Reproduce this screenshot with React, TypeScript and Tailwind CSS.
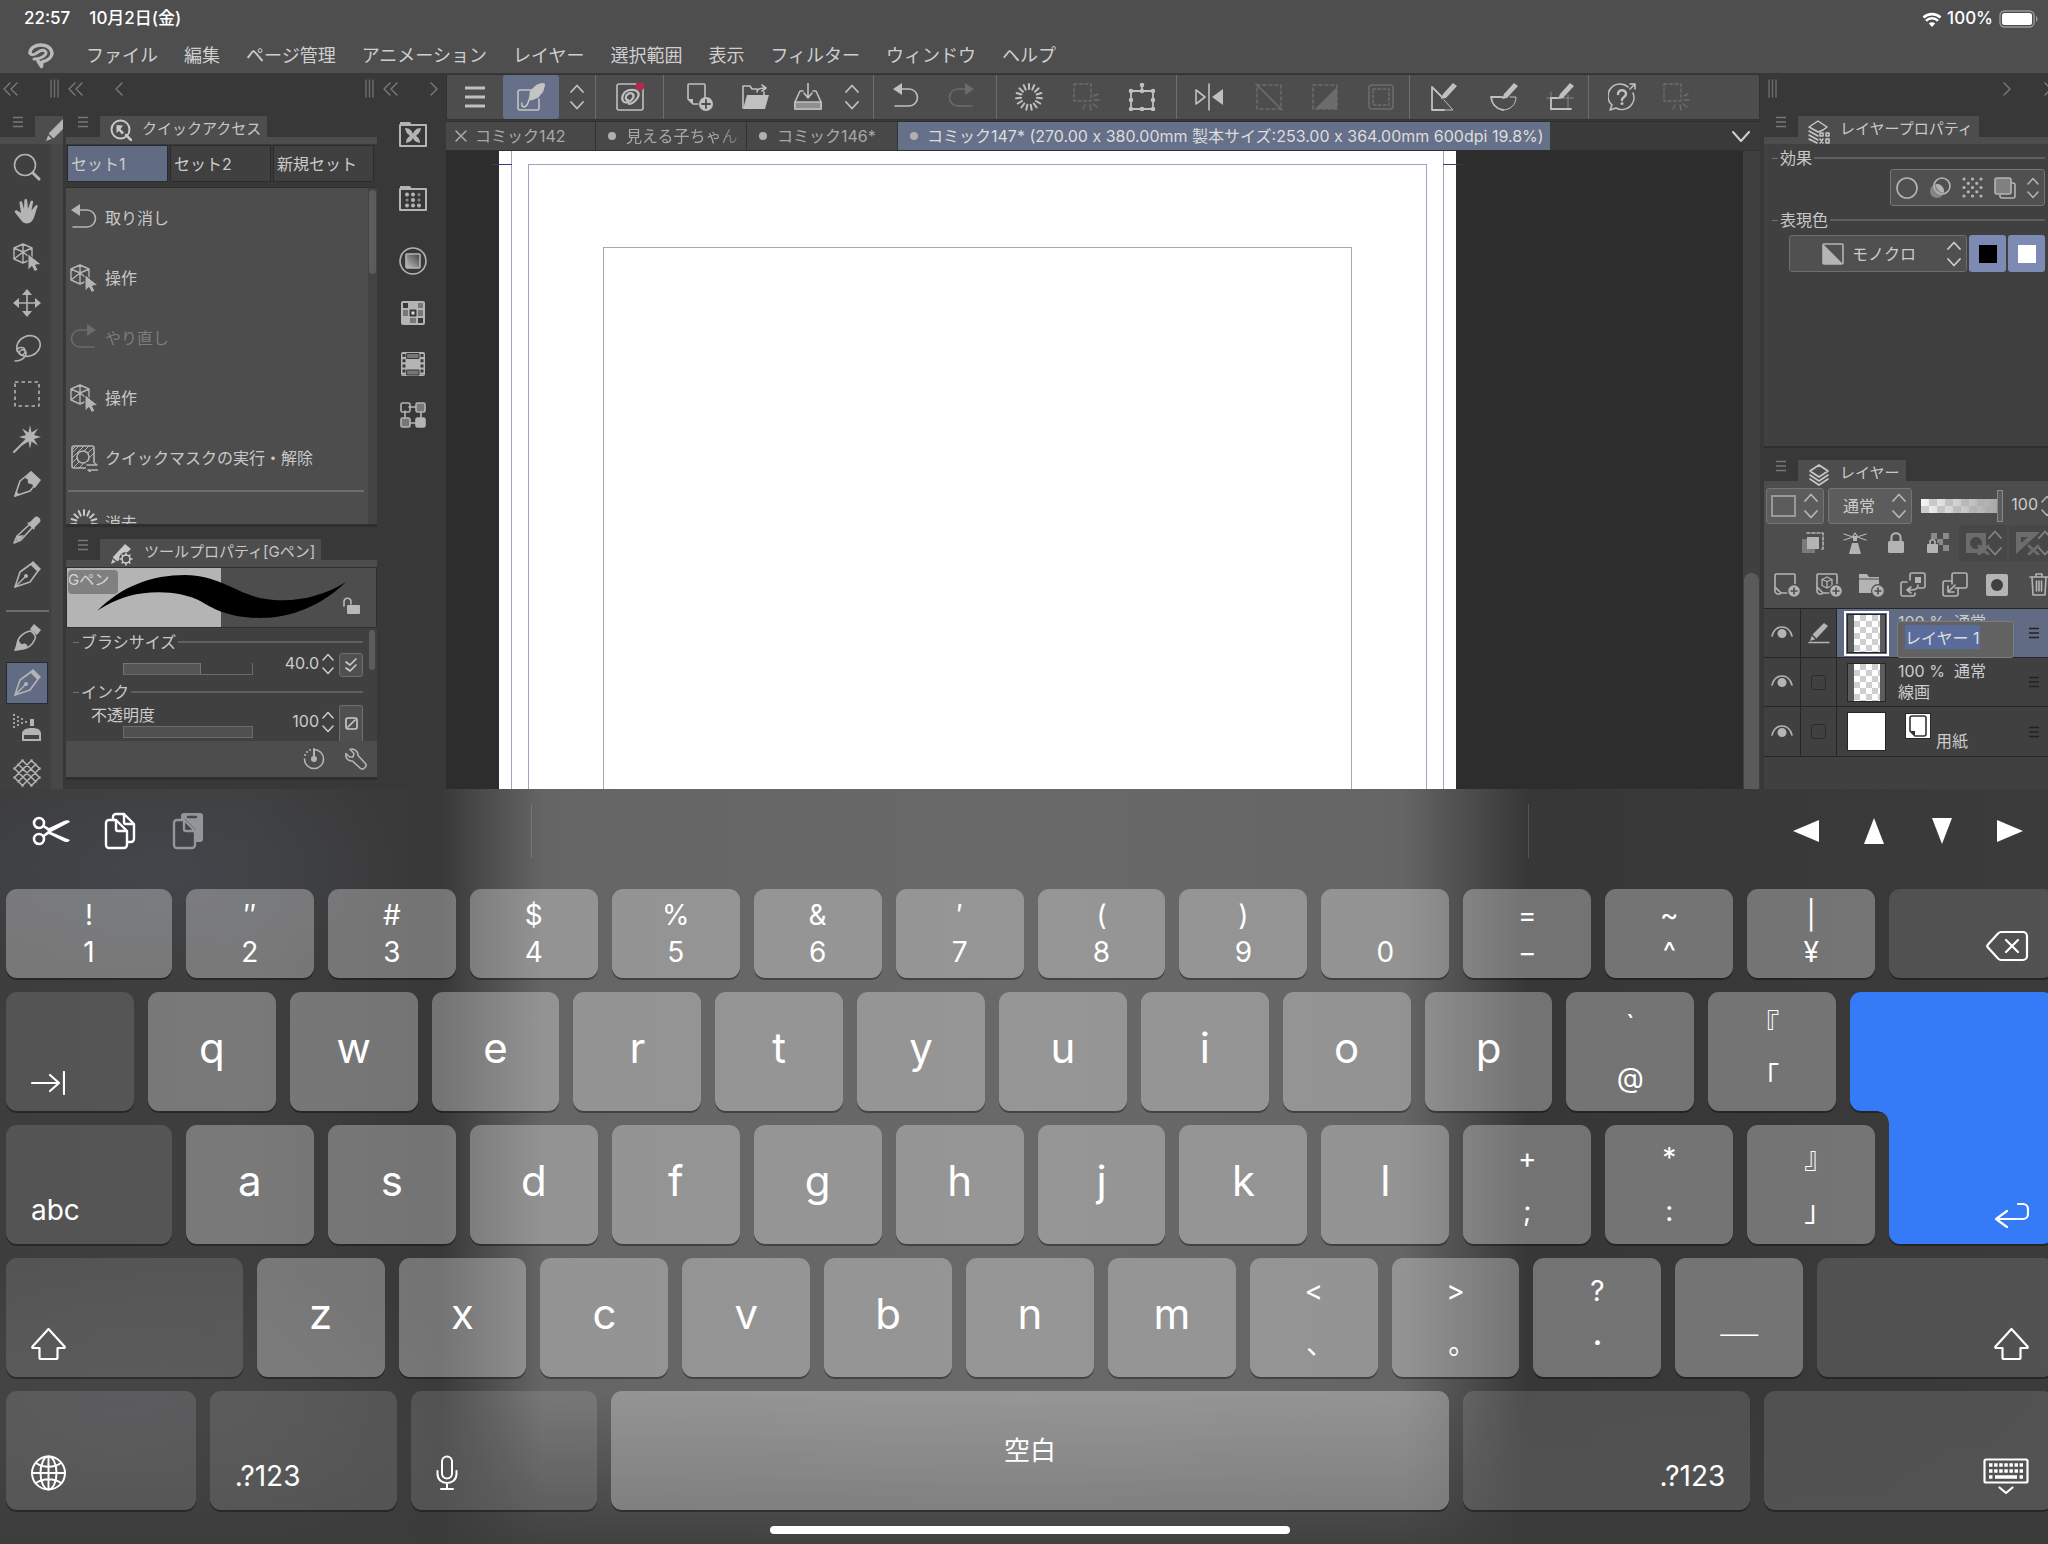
import React, { useEffect, useRef } from 'react';

interface IconProps {
	w?: number;
	h?: number;
	sw?: number;
	className?: string;
	children: React.ReactNode;
}

function Icon({ w = 28, h = 28, sw = 1.6, className = '', children }: IconProps) {
	return (
		<svg
			width={w}
			height={h}
			viewBox={`0 0 ${w} ${h}`}
			fill="none"
			stroke="currentColor"
			strokeWidth={sw}
			strokeLinecap="round"
			strokeLinejoin="round"
			className={`shrink-0 ${className}`}
			aria-hidden="true"
		>
			{children}
		</svg>
	);
}

const fill = { fill: 'currentColor', stroke: 'none' };

/* small shared glyphs */

function UpDown({ className = '' }: { className?: string }) {
	return (
		<Icon w={14} h={26} sw={1.8} className={className}>
			<path d="M1 8 7 1.5 13 8M1 18l6 6.5 6-6.5" />
		</Icon>
	);
}

function SmallUpDown({ className = '' }: { className?: string }) {
	return (
		<Icon w={12} h={22} sw={1.5} className={className}>
			<path d="M1 7 6 1.5 11 7M1 15l5 5.5 5-5.5" />
		</Icon>
	);
}

function Burger({ className = '' }: { className?: string }) {
	return (
		<Icon w={12} h={12} sw={1.4} className={className}>
			<path d="M1 1.5h10M1 6h10M1 10.5h10" strokeLinecap="butt" />
		</Icon>
	);
}

function Grip() {
	return (
		<Icon w={9} h={19} sw={1.4} className="text-[#6e6e6e]">
			<path d="M1 .5v18M4.500 .5v18M8 .5v18" strokeLinecap="butt" />
		</Icon>
	);
}

function DoubleLeft() {
	return (
		<Icon w={15} h={14} sw={1.4} className="text-[#7a7a7a]">
			<path d="M7 1 1 7l6 6M14 1 8 7l6 6" />
		</Icon>
	);
}

function Left() {
	return (
		<Icon w={8} h={14} sw={1.4} className="text-[#7a7a7a]">
			<path d="M7 1 1 7l6 6" />
		</Icon>
	);
}

function Right() {
	return (
		<Icon w={8} h={14} sw={1.4} className="text-[#7a7a7a]">
			<path d="m1 1 6 6-6 6" />
		</Icon>
	);
}

/* tool icons */

const Cube = (
	<>
		<path d="M10 1 19 5v11L10 20 1 16V5ZM1 5l9 4 9-4M10 9v11M10 1v8M1 16l9-7 9 7" strokeWidth={1.4} />
		<path d="M15 11v16l4-3.500 2.500 5 3.500-1.500-2.500-5 5.500-.5Z" fill="currentColor" stroke="#484848" strokeWidth={1} />
	</>
);

const Nib = (
	<>
		<path d="M2 26 7 11l11-8 7 7-8 11Z" />
		<path d="m2 26 10-10" strokeWidth={1.4} />
		<circle cx="13" cy="15" r="2" {...fill} />
		<path d="m17 3 3-3 8 8-3 3Z" {...fill} />
	</>
);

const UndoShape = (
	<>
		<path d="M9 6h8a8.500 8.500 0 0 1 0 17H3" />
		<path d="M10 0v12L1 6Z" {...fill} />
	</>
);

const RedoShape = (
	<>
		<path d="M18 6h-8a8.500 8.500 0 0 0 0 17h14" />
		<path d="M17 0v12l9-6Z" {...fill} />
	</>
);

const burstAngles = [0, 24, 48, 72, 96, 120, 144, 168, 192, 216, 240, 264, 288, 312, 336];

const Burst = (
	<>
		{burstAngles.map((a) => (
			<path key={a} d="M14 1v5" strokeWidth={2} transform={`rotate(${a} 14 14)`} />
		))}
	</>
);

const DashBurst = (
	<>
		<path d="M1 1h17v17H1Z" strokeDasharray="3 2.500" strokeWidth={1.4} />
		<path d="M21 17h5M20 21l4 3M17 22l1 5M12 22l-2 4M21 13l4-2" strokeWidth={1.4} />
	</>
);

const Search = (
	<>
		<circle cx="12" cy="12" r="10.500" />
		<path d="m20 20 6 6" strokeWidth={3} />
	</>
);

const Hand = (
	<path
		d="M8 22 2 14.500c-1-1.500 1-3 2.500-1.700L8 15 6.500 5c-.3-2 2.300-2.500 2.800-.5L11 11l.4-8.500c0-2 2.800-2 2.800 0L15 11l2.500-7.500c.6-1.900 3-1.200 2.600.7L18.500 12.500l3.800-4.800c1.200-1.500 3-.3 2.200 1.300C22 14 21.500 25 14.500 25.500 11 25.500 9.500 24 8 22Z"
		{...fill}
	/>
);

const Move = (
	<>
		<path d="M14 4v20M4 14h20" />
		<path d="m14 0 5 6H9ZM14 28l5-6H9ZM0 14l6-5v10ZM28 14l-6-5v10Z" {...fill} />
	</>
);

const Lasso = (
	<>
		<ellipse cx="15.500" cy="12" rx="12" ry="10" transform="rotate(-25 15.500 12)" />
		<path d="M4 17c0-4 7-5 8-1s-3 6-5 4 1-5 4-4c5 2 1 11-9 11" strokeWidth={1.4} />
	</>
);

const Wand = (
	<>
		<path d="m1 27 13-13" strokeWidth={2} />
		<path d="m17 0 1.500 7.500L25 3.500 21 10l7 2-7 2 4 6.500-6.500-4L17 24l-1.500-7.500-6.500 4 4-6.500-7-2 7-2-4-6.500 6.500 4Z" {...fill} />
	</>
);

const Pencil = (
	<>
		<path d="M2 26 7 11 18 2l8 8-9 11Z" />
		<path d="m12 8 6-7 10 9-6 8c-2-1-2-4-4-4s-4-1-3-4c0-1-2-1-3-2Z" {...fill} />
		<path d="m1 27 2-6 4 4Z" {...fill} />
	</>
);

const Dropper = (
	<>
		<path d="m19 12-11 12-7 3 3-7L16 9" />
		<path d="m4 20 7-1-4 5-4 1Z" {...fill} />
		<path d="m14 7 3-1 5-5c2-2 7 2 5 5l-5 5-1 3Z" {...fill} />
	</>
);

const Brush = (
	<>
		<path d="M4 22c0-8 6-14 14-15 4 3 5 6 4 8-3 7-8 10-14 10" />
		<path d="m1 27 4-11c2 1 2 4 4 4s2-1 4 0 1 4 3 3c-4 3-9 3-15 4ZM17 5l4-5 7 6-4 5Z" {...fill} />
	</>
);

const Spray = (
	<>
		<path d="M9 27V20c0-4 4-6 10-6s9 2 9 6v7ZM17 5h4v7h-4Z" {...fill} />
		<path d="M11 21h15v4H11Z" fill="#444" stroke="none" />
		<path d="M1 1h.01M1 5h.01M1 9h.01M1 13h.01M5 3h.01M5 7h.01M5 11h.01M9 5h.01M9 9h.01M13 8h.01" strokeWidth={2.2} />
	</>
);

const Mesh = (
	<path
		d="M9 1l18 18M18 1l9 9M1 9l18 18M1 18l9 9M5 5l18 18M19 1 1 19M10 1 1 10M27 9 9 27M27 18l-9 9M23 5 5 23"
		strokeWidth={1.5}
	/>
);

const Marquee = <path d="M2 2h24v24H2Z" strokeDasharray="3.500 3" strokeLinecap="butt" />;

const tools = [
	{ name: '虫めがね', icon: Search },
	{ name: '移動', icon: Hand },
	{ name: '操作', icon: Cube },
	{ name: 'レイヤー移動', icon: Move },
	{ name: '選択範囲', icon: Lasso },
	{ name: '長方形選択', icon: Marquee },
	{ name: '自動選択', icon: Wand },
	{ name: '鉛筆', icon: Pencil },
	{ name: 'スポイト', icon: Dropper },
	{ name: 'ペン', icon: Nib },
];

const drawTools = [
	{ name: '筆', icon: Brush },
	{ name: 'Gペン', icon: Nib, active: true },
	{ name: 'エアブラシ', icon: Spray },
	{ name: 'デコレーション', icon: Mesh },
];

const menus = [
	'ファイル',
	'編集',
	'ページ管理',
	'アニメーション',
	'レイヤー',
	'選択範囲',
	'表示',
	'フィルター',
	'ウィンドウ',
	'ヘルプ',
];

function StatusBar() {
	return (
		<div className="flex h-9 items-center justify-between pt-[2px] pr-[10px] pl-6 text-[17px] font-medium text-white">
			<div className="flex gap-[19px]">
				<span>22:57</span>
				<span>10月2日(金)</span>
			</div>
			<div className="flex items-center gap-1">
				<Icon w={20} h={15}>
					<path d="M10 15 6.800 11.500a4.500 4.500 0 0 1 6.400 0Z" {...fill} />
					<path d="M4 8.800a8.500 8.500 0 0 1 12 0M1.500 5.500a12.500 12.500 0 0 1 17 0" strokeWidth={2.6} strokeLinecap="butt" />
				</Icon>
				<span className="pr-[2px] pl-px">100%</span>
				<Icon w={39} h={18} sw={1.4}>
					<rect x="1" y="1" width="34" height="16" rx="4.500" stroke="#9a9a9a" />
					<rect x="3" y="3" width="30" height="12" rx="2.500" {...fill} />
					<path d="M37 6c2 1 2 5 0 6Z" fill="#9a9a9a" stroke="none" />
				</Icon>
			</div>
		</div>
	);
}

function MenuBar() {
	return (
		<nav className="flex h-[37px] items-center pt-[2px] pl-[27px] text-[18px] text-[#cfcfcf]">
			<Icon w={27} h={26} sw={3.4} className="text-[#b9b9b9]">
				<path d="M3 10C3 5 8 2 14 2c7 0 11 4 11 9-1 5-6 7-10 8l-.5 4.500L11 18" />
				<path d="M3 10c1 2 3 2 5 1l5-3c4-2 8 1 5 4-3 3-7 4-11 4" strokeWidth={3} />
			</Icon>
			<div className="flex gap-[26px] pl-8">
				{menus.map((m) => (
					<button key={m} type="button">
						{m}
					</button>
				))}
			</div>
		</nav>
	);
}

interface PanelTabProps {
	title: string;
	icon: React.ReactNode;
}

function PanelTab({ title, icon }: PanelTabProps) {
	return (
		<div className="flex h-10 shrink-0 items-end border-b-[7px] border-[#4d4d4d] bg-[#383838] pl-[11px]">
			<Burger className="mb-[9px] text-[#777777]" />
			<h2 className="relative z-10 ml-[11px] flex h-[21px] items-center gap-[10px] bg-[#4d4d4d] pt-[6px] pr-[6px] pl-[10px] text-[15px] text-[#c8c8c8]">
				{icon}
				<span>{title}</span>
			</h2>
		</div>
	);
}

function ToolButton({ name, icon, active }: { name: string; icon: React.ReactNode; active?: boolean }) {
	return (
		<button
			type="button"
			aria-label={name}
			className={
				active
					? 'flex h-[42px] w-[42px] items-center justify-center self-center border border-[#252a35] bg-[#626b84]'
					: 'flex w-[42px] items-center justify-center'
			}
		>
			<Icon>{icon}</Icon>
		</button>
	);
}

function ToolColumn() {
	return (
		<aside className="flex w-[63px] shrink-0 flex-col overflow-hidden">
			<div className="flex h-[31px] shrink-0 items-center justify-between bg-[#383838] pr-1 pl-[3px]">
				<DoubleLeft />
				<Grip />
			</div>
			<div className="flex h-10 shrink-0 items-end border-b-[7px] border-[#4d4d4d] bg-[#383838] pl-3">
				<Burger className="mb-[9px] text-[#777777]" />
				<div className="ml-[11px] h-[21px] w-7 bg-[#4d4d4d] pl-[10px] text-[#b4b4b4]">
					<Icon w={22} h={24} className="overflow-visible">
						<path d="m1 25 3-8 14-14 5 5L9 22Z" {...fill} />
						<path d="m3 18 5 5" stroke="#4d4d4d" strokeWidth={1.5} />
					</Icon>
				</div>
			</div>
			<div className="min-h-0 flex-1 overflow-hidden border-r-[12px] border-[#474747] bg-[#404040] pl-[6px] text-[#b4b4b4]">
				<div className="grid h-[454px] auto-rows-fr">
					{tools.map((t) => (
						<ToolButton key={t.name} {...t} />
					))}
				</div>
				<div className="mt-3 h-[2px] w-[43px] bg-[#6c6c6c]" />
				<div className="mt-[3px] grid h-[181px] auto-rows-fr">
					{drawTools.map((t) => (
						<ToolButton key={t.name} {...t} />
					))}
				</div>
			</div>
		</aside>
	);
}

const QuickMask = (
	<>
		<rect x="2" y="2" width="22" height="22" rx="2" />
		<path d="M2 9 9 2M2 14 14 2M2 19 19 2M4 23 23 4M9 24 24 9M2 6l4-4" strokeWidth={1} />
		<circle cx="13" cy="13" r="6" fill="#4d4d4d" />
		<path d="M16 18h12v10H16Z" fill="#4d4d4d" stroke="none" />
		<path d="M17 21h10l-3-2.500M28 26H18l3 2.500" strokeWidth={1.4} />
	</>
);

const quickItems = [
	{ label: '取り消し', icon: UndoShape },
	{ label: '操作', icon: Cube },
	{ label: 'やり直し', icon: RedoShape, disabled: true },
	{ label: '操作', icon: Cube },
	{ label: 'クイックマスクの実行・解除', icon: QuickMask },
];

function QuickAccess() {
	return (
		<section className="border-b-[3px] border-[#2f2f2f] bg-[#404040]">
			<PanelTab
				title="クイックアクセス"
				icon={
					<Icon w={22} h={22} sw={2}>
						<circle cx="10.500" cy="10.500" r="9" />
						<path d="m16 16 5 5" strokeWidth={2.5} />
						<path d="M6.500 6v8l2.500-2 3 3.500 2-2-3.500-3.500L13 6.500Z" {...fill} />
					</Icon>
				}
			/>
			<div className="grid h-[43px] grid-cols-3 gap-[2px] bg-[#383838] pt-px pr-[3px] pb-[5px] pl-[1px] text-[16px] text-[#cccccc]">
				<button type="button" className="border border-[#252a35] bg-[#626b84] pl-[3px] text-left">
					セット1
				</button>
				<button type="button" className="border border-[#2c2c2c] bg-[#404040] pl-[3px] text-left">
					セット2
				</button>
				<button type="button" className="border border-[#2c2c2c] bg-[#404040] pl-[3px] text-left">
					新規セット
				</button>
			</div>
			<div className="flex h-[337px] border-t border-[#2f2f2f] bg-[#4d4d4d]">
				<ul className="min-w-0 flex-1 overflow-hidden text-[16px] text-[#c8c8c8]">
					{quickItems.map((item, i) => (
						<li key={i}>
							<button
								type="button"
								className={
									item.disabled
										? 'flex h-[60px] w-full items-center gap-[7px] pl-1 text-[#7c7c7c]'
										: 'flex h-[60px] w-full items-center gap-[7px] pl-1'
								}
							>
								<Icon className={item.disabled ? 'text-[#6b6b6b]' : 'text-[#b4b4b4]'}>{item.icon}</Icon>
								{item.label}
							</button>
						</li>
					))}
					<li className="mt-[2px] mr-1 ml-[2px] border-t-2 border-[#6c6c6c]">
						<button type="button" className="flex h-[62px] w-full items-center gap-[7px] pl-[2px]">
							<Icon>{Burst}</Icon>
							消去
						</button>
					</li>
				</ul>
				<div className="w-[9px] bg-[#434343] px-px pt-[2px]">
					<div className="h-[84px] rounded-full bg-[#5c5c5c]" />
				</div>
			</div>
		</section>
	);
}

function Legend({ children }: { children: React.ReactNode }) {
	return (
		<div className="flex h-[22px] items-center gap-[2px] text-[16px] text-[#c8c8c8]">
			<span className="h-px w-[6px] bg-[#707070]" />
			<span>{children}</span>
			<span className="h-[2px] flex-1 bg-[#606060]" />
		</div>
	);
}

function ToolProperty() {
	return (
		<section className="flex min-h-0 flex-1 flex-col bg-[#404040]">
			<PanelTab
				title="ツールプロパティ[Gペン]"
				icon={
					<Icon w={24} h={24} className="mt-1">
						<path d="m1 21 2-7L15 1l6 5L8 18Z" {...fill} />
						<path d="m2 15 5 4" stroke="#4d4d4d" />
						<circle cx="16" cy="16" r="7" fill="#4d4d4d" stroke="none" />
						<circle cx="16" cy="16" r="4" />
						<path d="M16 10v2M16 20v2M10 16h2M20 16h2M12 12l1 1M20 20l-1-1M12 20l1-1M20 12l-1 1" />
					</Icon>
				}
			/>
			<div className="flex h-[61px] shrink-0 items-center border border-[#2f2f2f] bg-[linear-gradient(to_right,#b4b4b4_50%,#4d4d4d_50%)]">
				<div className="relative h-full flex-1">
					<svg viewBox="0 0 310 58" width="310" height="58" className="absolute top-0 left-0" aria-hidden="true">
						<path
							d="M30 43C55 18 85 7 118 7c32 0 50 17 75 23 30 6 60 0 86-16-25 24-55 36-86 36-28 0-45-8-58-16-20-11-50-12-73-6-14 4-23 9-32 15Z"
							fill="#000"
						/>
					</svg>
					<span className="absolute top-[2px] left-px h-6 w-[50px] rounded-sm bg-[#808080] text-[15px] leading-5 text-[#d4d4d4]">
						Gペン
					</span>
					<Icon w={18} h={18} className="absolute right-4 bottom-3 text-[#b9b9b9]">
						<path d="M2 9V5c0-5 7-5 7 0v2" />
						<rect x="5" y="8" width="13" height="9" rx="1" {...fill} />
					</Icon>
				</div>
			</div>
			<div className="flex h-[113px] shrink-0 overflow-hidden">
				<div className="min-w-0 flex-1 pt-[3px] pr-[6px] pl-[7px]">
					<Legend>ブラシサイズ</Legend>
					<div className="flex h-[28px] items-start text-[#cccccc]">
						<input
							type="range"
							aria-label="ブラシサイズ"
							defaultValue={60}
							className="mt-[10px] ml-[50px] h-[12px] w-[130px] appearance-none border-r border-b border-[#6c6c6c] [background:linear-gradient(#565656,#565656)_1px_1px/76px_11px_no-repeat,linear-gradient(#767676,#767676)_0_0/78px_12px_no-repeat,#404040] [&::-webkit-slider-thumb]:opacity-0"
						/>
						<input aria-label="サイズ" defaultValue="40.0" className="h-5 w-[66px] bg-transparent text-right text-[16px]" />
						<span className="ml-[3px]">
							<SmallUpDown />
						</span>
						<button type="button" aria-label="影響元設定" className="ml-[5px] flex size-6 items-center justify-center rounded-[3px] border border-[#6e6e6e] bg-[#505050]">
							<Icon w={14} h={16}>
								<path d="m2 5 4 3 6-6M2 11l4 3 6-6" />
							</Icon>
						</button>
					</div>
					<Legend>インク</Legend>
					<div className="flex items-start text-[#cccccc]">
						<label className="flex w-[180px] flex-col pl-[18px] text-[16px] leading-6">
							不透明度
							<input
								type="range"
								defaultValue={100}
								className="-mt-px ml-[32px] h-[12px] w-[130px] appearance-none border border-[#6c6c6c] bg-[#505050] [&::-webkit-slider-thumb]:opacity-0"
							/>
						</label>
						<input aria-label="不透明度の値" defaultValue="100" className="mt-[6px] h-6 w-[66px] bg-transparent text-right text-[16px]" />
						<span className="mt-[8px] ml-[3px]">
							<SmallUpDown />
						</span>
						<button type="button" aria-label="不透明度影響元" className="mt-[2px] ml-[5px] flex h-9 w-6 items-center justify-center rounded-t-[3px] border border-b-0 border-[#6e6e6e] bg-[#505050]">
							<Icon w={13} h={13}>
								<rect x="1" y="1" width="11" height="11" rx="2" />
								<path d="m3 10 7-7" />
							</Icon>
						</button>
					</div>
				</div>
				<div className="w-2 pt-[2px]">
					<div className="h-10 w-[6px] rounded-full bg-[#5c5c5c]" />
				</div>
			</div>
			<div className="flex h-9 shrink-0 items-center justify-end gap-5 bg-[#4d4d4d] pr-[10px] text-[#b4b4b4]">
				<Icon w={22} h={22}>
					<path d="M11 1.500a9.500 9.500 0 1 1-9.500 9.500" />
					<path d="M11 1v9" strokeWidth={2} />
					<circle cx="11" cy="11" r="3" {...fill} />
					<path d="M2 7h.01M4 4h.01M7 2h.01" strokeWidth={2} />
				</Icon>
				<Icon w={22} h={22}>
					<path d="M5 1.500 9 5.500 8 9 4.500 9 1 5.500c-1 4 2 8 6.500 7.500l7.500 7c3 3 8-2 5-5l-7-7.500c.5-4-4-7.500-8-6Z" />
				</Icon>
			</div>
			<div className="flex-1 border-t-[3px] border-[#2f2f2f] bg-[#383838]" />
		</section>
	);
}

function PaletteDock() {
	return (
		<aside className="flex w-[67px] shrink-0 flex-col items-center bg-[#383838] text-[#b4b4b4]">
			<div className="flex h-[31px] w-full items-center justify-between pr-2 pl-1">
				<DoubleLeft />
				<Right />
			</div>
			<button type="button" aria-label="素材" className="mt-[16px]">
				<Icon sw={2}>
					<path d="M1 5h26v21H1Z" />
					<path d="M1 6V2h10l2 3Z" {...fill} />
					<path d="M6 8c5 0 7 3 8 6 1-3 3-6 8-6-1 5-3 6-5 8 2 1 4 3 4 7-5-1-6-3-7-5-1 2-2 4-7 5 0-4 2-6 4-7-2-2-4-3-5-8Z" {...fill} />
				</Icon>
			</button>
			<button type="button" aria-label="トーン素材" className="mt-[36px]">
				<Icon sw={2}>
					<path d="M1 5h26v21H1Z" />
					<path d="M1 6V2h10l2 3Z" {...fill} />
					<path d="M8 10.500h.01M14 10.500h.01M8 21.500h.01M14 21.500h.01M20 21.500h.01M14 16h.01" strokeWidth={4} />
					<path d="M20 10.500h.01M8 16h.01M20 16h.01" strokeWidth={3} stroke="#8a8a8a" />
				</Icon>
			</button>
			<button type="button" aria-label="グラデーション" className="mt-[35px]">
				<Icon>
					<defs>
						<linearGradient id="dock-fade" x1="0" y1="1" x2="1" y2="0">
							<stop offset=".1" stopColor="#b4b4b4" />
							<stop offset="1" stopColor="#404040" />
						</linearGradient>
					</defs>
					<circle cx="14" cy="14" r="13" />
					<rect x="7" y="7" width="14" height="14" rx="1" fill="url(#dock-fade)" />
				</Icon>
			</button>
			<button type="button" aria-label="カラーセット" className="mt-[24px]">
				<Icon>
					<rect x="2" y="2" width="24" height="24" rx="2" {...fill} />
					<path d="M4 4h5v5H4ZM19 19h5v5h-5Z" fill="#383838" stroke="none" />
					<path d="M4 11h5v6H4ZM19 11h5v6h-5ZM19 4h5v5h-5ZM11 19h6v5h-6Z" fill="#777" stroke="none" />
					<path d="M11.500 11.500h5v5h-5Z" fill="#ddd" stroke="#383838" strokeWidth={2} />
				</Icon>
			</button>
			<button type="button" aria-label="タイムライン" className="mt-[23px]">
				<Icon>
					<rect x="2" y="2" width="24" height="24" rx="2" {...fill} />
					<path d="M5 4v21M23 4v21" stroke="#383838" strokeWidth={3} strokeDasharray="3 2.200" strokeLinecap="butt" />
					<path d="M8 3.500h12v5H8ZM8 20h12v5H8Z" fill="#777" stroke="#383838" strokeWidth={1} />
				</Icon>
			</button>
			<button type="button" aria-label="オートアクション" className="mt-[23px]">
				<Icon sw={1.6}>
					<path d="M10 6h8M10 22h8M6 10v8M22 10v8" />
					<rect x="2" y="2" width="9" height="9" rx="1.500" />
					<rect x="17" y="2" width="9" height="9" rx="1.500" fill="#777" />
					<rect x="2" y="17" width="9" height="9" rx="1.500" fill="#777" />
					<rect x="17" y="17" width="9" height="9" rx="1.500" fill="currentColor" />
				</Icon>
			</button>
		</aside>
	);
}

function Sep() {
	return <span className="h-11 w-px shrink-0 bg-[#6e6e6e]" />;
}

interface BarButtonProps {
	name: string;
	width?: string;
	dim?: boolean;
	children: React.ReactNode;
}

function BarButton({ name, width = 'w-[56px]', dim, children }: BarButtonProps) {
	return (
		<button
			type="button"
			aria-label={name}
			className={`flex h-full shrink-0 items-center justify-center ${width} ${dim ? 'text-[#6c6c6c]' : 'text-[#c0c0c0]'}`}
		>
			<Icon>{children}</Icon>
		</button>
	);
}

function CommandBar() {
	return (
		<div className="mt-px flex h-[46px] shrink-0 items-center overflow-hidden border border-[#333333] bg-[#4d4d4d] text-[#c0c0c0]">
			<BarButton name="メニュー">
				<path d="M4 5h20M4 14h20M4 23h20" strokeWidth={3} strokeLinecap="butt" />
			</BarButton>
			<button type="button" aria-label="モード切替" className="flex h-full w-[56px] shrink-0 items-center justify-center rounded-[3px] bg-[#667088]">
				<Icon className="text-[#c4c4c4]">
					<path d="M15 7H3a2 2 0 0 0-2 2v16a2 2 0 0 0 2 2h17a2 2 0 0 0 2-2v-9" />
					<path d="M5 20c-1 3 1 5 4 3 3-3 2-6 5-9" />
					<path d="m13 8 4-4c3-3 6-4 9-4 2 0 2 1 2 3-1 2-1 4-2 6l-5 6c-2 0-3 1-5 2-3 1-5-1-4-3s0-4 1-6Z" {...fill} />
				</Icon>
			</button>
			<span className="flex w-[36px] shrink-0 justify-center">
				<UpDown />
			</span>
			<Sep />
			<BarButton name="CLIP STUDIO" width="w-[67px]">
				<rect x="1" y="1" width="26" height="26" rx="2" />
				<path d="M12 17c-3 0-3-4 0-6s7 0 5 4-8 6-10 3 0-10 7-11 10 3 8 7-6 7-9 7" strokeWidth={2.2} />
				<circle cx="24" cy="3" r="4.500" fill="#b02a4c" stroke="none" />
			</BarButton>
			<Sep />
			<BarButton name="新規" width="w-[72px]">
				<path d="M7 21 2 16V2a1 1 0 0 1 1-1h15a1 1 0 0 1 1 1v13M7 21h5" />
				<path d="M2 16h5v5Z" {...fill} />
				<circle cx="20" cy="21" r="7" {...fill} />
				<path d="M20 17v8M16 21h8" stroke="#4d4d4d" strokeWidth={1.8} />
			</BarButton>
			<BarButton name="開く" width="w-[38px]">
				<path d="M2 25V3h7l2 3h5M16 9c0-3 3-4 8-4M21 2l4 3-4 3M23 12V9" />
				<path d="M6 12h22l-4 14H2Z" {...fill} />
			</BarButton>
			<BarButton name="保存" width="w-[68px]">
				<path d="M9 8H6L1 19v7h26v-7L22 8h-3" />
				<path d="M14 0v14M10 10l4 5 4-5" />
				<path d="M1 19h26v7H1Z" fill="#8f8f8f" />
			</BarButton>
			<span className="flex w-[20px] shrink-0 justify-center">
				<UpDown />
			</span>
			<span className="w-[11px] shrink-0" />
			<Sep />
			<BarButton name="取り消し" width="w-[64px]">
				{UndoShape}
			</BarButton>
			<BarButton name="やり直し" width="w-[48px]" dim>
				{RedoShape}
			</BarButton>
			<span className="w-[10px] shrink-0" />
			<Sep />
			<BarButton name="消去" width="w-[64px]">
				{Burst}
			</BarButton>
			<BarButton name="選択範囲外を消去" width="w-[52px]" dim>
				{DashBurst}
			</BarButton>
			<BarButton name="拡大・縮小・回転" width="w-[58px]">
				<path d="M3 8h22v18H3ZM14 2v6" strokeWidth={1.8} />
				<path d="M3 8h.01M14 8h.01M25 8h.01M3 17h.01M25 17h.01M3 26h.01M14 26h.01M25 26h.01M14 2h.01" strokeWidth={4.5} />
			</BarButton>
			<span className="w-[5px] shrink-0" />
			<Sep />
			<BarButton name="左右反転" width="w-[64px]">
				<path d="M14 1v26M1 7v14l9-7Z" />
				<path d="M28 6v16l-11-8Z" {...fill} />
			</BarButton>
			<BarButton name="選択を解除" dim>
				<path d="M2 2h24v24H2Z" strokeDasharray="3 3" />
				<path d="m1 1 26 26" />
			</BarButton>
			<BarButton name="選択範囲を反転" dim>
				<path d="M2 2h24v24H2Z" strokeDasharray="3 3" />
				<path d="M26 4v22H4Z" {...fill} />
			</BarButton>
			<BarButton name="境界" dim>
				<rect x="2" y="2" width="24" height="24" rx="3" />
				<path d="M6 6h16v16H6Z" strokeDasharray="2.500 2.500" />
			</BarButton>
			<Sep />
			<BarButton name="定規にスナップ" width="w-[66px]">
				<path d="M3 4v23h12M3 4l10 10" strokeWidth={1.8} />
				<path d="m15 17 9 10h-9" strokeWidth={1} />
				<path d="m12 16 2-5L24 0l4 3-11 12Z" {...fill} />
			</BarButton>
			<BarButton name="特殊定規にスナップ" width="w-[56px]">
				<path d="M12 14H1c1 8 6 12 12 13" strokeWidth={1.8} />
				<path d="M13 27c7 0 13-5 13-13h-6" strokeWidth={1} />
				<path d="m12 16 2-5L24 0l4 3-11 12Z" {...fill} />
			</BarButton>
			<BarButton name="グリッドにスナップ" width="w-[56px]">
				<path d="M5 9v18M1 15h27M22 12v15" strokeWidth={1} stroke="#8a8a8a" />
				<path d="M12 15H5v11h20" strokeWidth={1.8} />
				<path d="m12 16 2-5L24 0l4 3-11 12Z" {...fill} />
			</BarButton>
			<Sep />
			<BarButton name="ヘルプ" width="w-[66px]">
				<path d="M20 4A12 12 0 0 0 4 22l-2 5 6-2a12 12 0 0 0 17-15M22 6l5-5M22 1h5v5" />
				<path d="M10 11c0-5 8-5 8 0 0 3-4 3-4 6" strokeWidth={2.5} />
				<path d="M14 20.500h.01" strokeWidth={3} />
			</BarButton>
			<BarButton name="選択範囲ランチャー" width="w-[44px]" dim>
				{DashBurst}
			</BarButton>
		</div>
	);
}

function DocumentTabs() {
	return (
		<div className="flex h-[30px] shrink-0 items-stretch justify-between border-y border-[#303030] bg-[#3a3a3a] text-[16px] whitespace-nowrap text-[#a8a8a8]">
			<div className="flex min-w-0">
				<button type="button" className="flex w-[150px] shrink-0 items-center gap-[8px] border-r border-[#333333] bg-[#484848] pl-[9px]">
					<Icon w={12} h={12}>
						<path d="m1 1 10 10M11 1 1 11" />
					</Icon>
					コミック142
				</button>
				<button type="button" className="flex w-[151px] shrink-0 items-center gap-[10px] border-r border-[#333333] bg-[#484848] pl-3">
					<span className="size-2 shrink-0 rounded-full bg-[#b0b0b0]" />
					<span className="[mask-image:linear-gradient(to_right,#000_80%,#0006)]">見える子ちゃん</span>
				</button>
				<button type="button" className="flex w-[151px] shrink-0 items-center gap-[10px] border-r border-[#333333] bg-[#484848] pl-3">
					<span className="size-2 rounded-full bg-[#b0b0b0]" />
					コミック146*
				</button>
				<button type="button" className="flex shrink-0 items-center gap-[9px] bg-[#667088] pr-[6px] pl-3 text-[#dddddd]">
					<span className="size-2 rounded-full bg-[#b0b0b0]" />
					コミック147* (270.00 x 380.00mm 製本サイズ:253.00 x 364.00mm 600dpi 19.8%)
				</button>
			</div>
			<button type="button" aria-label="タブ一覧" className="pr-[10px] text-[#cfcfcf]">
				<Icon w={18} h={11} sw={2}>
					<path d="m1 1 8 9 8-9" />
				</Icon>
			</button>
		</div>
	);
}

function Canvas() {
	return (
		<div className="flex min-h-0 flex-1 overflow-hidden bg-[#2d2d2d]">
			<div className="flex min-w-0 flex-1 pl-[53px]">
				<div className="relative w-10/13 bg-white px-[12px]">
					<span className="absolute top-[13px] -left-[7px] h-px w-5 bg-[#3b3b70]" />
					<span className="absolute top-[13px] -right-[7px] h-px w-5 bg-[#3b3b70]" />
					<div className="h-full border-x border-[#a3a3bf] px-[16px] pt-[13px]">
						<div className="h-full border-x border-t border-[#a3a3bf] px-[74px] pt-[82px]">
							<div className="h-full border-x border-t border-[#a8a8a8]" />
						</div>
					</div>
				</div>
			</div>
			<div className="flex w-[17px] flex-col justify-end bg-[#404040] px-px">
				<div className="h-[216px] rounded-t-full bg-[#5a5a5a]" />
			</div>
		</div>
	);
}

function LayerProperty() {
	return (
		<section className="h-[344px] shrink-0 border-b-2 border-[#2f2f2f] bg-[#404040]">
			<PanelTab
				title="レイヤープロパティ"
				icon={
					<Icon w={22} h={24} sw={1.5} className="mt-1">
						<path d="m10 1 9 6-4 3-5 2-9-5ZM1 11l9 5M1 15l9 5M1 19l8 4" />
						<rect x="12" y="13" width="3" height="3" />
						<rect x="18" y="13" width="3" height="3" />
						<path d="m12 19 3 4M15 19l-3 4" />
						<rect x="18" y="19" width="3" height="4" />
					</Icon>
				}
			/>
			<div className="pt-[3px] pr-[3px] pl-2">
				<Legend>効果</Legend>
				<div className="flex justify-end">
					<div className="flex h-[37px] w-[155px] items-center justify-between rounded-[3px] border border-[#757575] bg-[#505050] pr-[5px] pl-[5px] text-[#b4b4b4]">
						<Icon w={22} h={22}>
							<circle cx="11" cy="11" r="10" />
						</Icon>
						<Icon w={22} h={22}>
							<circle cx="8" cy="14" r="7" fill="#858585" stroke="none" />
							<circle cx="13" cy="9" r="8" />
							<path d="M7 7a7.500 7.500 0 0 1 8 8.500A8 8 0 0 1 7 7Z" {...fill} />
						</Icon>
						<Icon w={22} h={22} sw={3.2}>
							<path d="M2 2h.01M10.500 2h.01M19 2h.01M6.300 6.300h.01M14.800 6.300h.01M2 10.500h.01M10.500 10.500h.01M19 10.500h.01M6.300 14.800h.01M14.800 14.800h.01M2 19h.01M10.500 19h.01M19 19h.01" />
						</Icon>
						<Icon w={22} h={22}>
							<path d="M18 6h1a2 2 0 0 1 2 2v11a2 2 0 0 1-2 2H8a2 2 0 0 1-2-2v-1" />
							<rect x="1" y="1" width="16" height="16" rx="2" fill="#808080" />
						</Icon>
						<SmallUpDown />
					</div>
				</div>
				<div className="pt-[3px]">
					<Legend>表現色</Legend>
				</div>
				<div className="flex justify-end gap-[2px] pt-1">
					<label className="flex h-[37px] w-[178px] items-center rounded-[3px] border border-[#6e6e6e] bg-[#505050] pr-[5px] pl-8 text-[#cccccc]">
						<Icon w={22} h={22} className="text-[#b4b4b4]">
							<rect x="1" y="1" width="20" height="20" rx="1" />
							<path d="M1 1v20h20Z" {...fill} />
						</Icon>
						<select aria-label="表現色" className="ml-2 min-w-0 flex-1 appearance-none bg-transparent text-[16px]">
							<option>モノクロ</option>
						</select>
						<UpDown />
					</label>
					<button type="button" aria-label="黒" className="flex h-[37px] w-[37px] items-center justify-center rounded-[3px] bg-[#7c8ab4]">
						<span className="size-[18px] bg-black" />
					</button>
					<button type="button" aria-label="白" className="flex h-[37px] w-[37px] items-center justify-center rounded-[3px] bg-[#7c8ab4]">
						<span className="size-[18px] bg-white" />
					</button>
				</div>
			</div>
		</section>
	);
}

const Plus = (
	<>
		<circle cx="20" cy="19" r="7" fill="#4d4d4d" stroke="none" />
		<circle cx="20" cy="19" r="5.800" {...fill} />
		<path d="M20 16v6M17 19h6" stroke="#4d4d4d" />
	</>
);

function Checker({ paper }: { paper?: boolean }) {
	if (paper) {
		return <div className="size-[39px] border border-[#262626] bg-white" />;
	}
	return (
		<div className="flex size-[39px] justify-center border border-[#262626] bg-[#5c5c5c]">
			<div className="h-full w-[26px] bg-[conic-gradient(#cfcfcf_25%,#fff_0_50%,#cfcfcf_0_75%,#fff_0)] bg-[length:12px_12px]" />
		</div>
	);
}

function Eye() {
	return (
		<Icon w={22} h={16}>
			<path d="M1 11C3 4 7 2 11 2s8 2 10 9" />
			<circle cx="11" cy="8.500" r="4.500" {...fill} />
		</Icon>
	);
}

function LayerCells({ editing }: { editing?: boolean }) {
	return (
		<>
			<button type="button" aria-label="表示切替" className="flex w-[37px] shrink-0 items-center justify-center border-r border-[#262626] text-[#b4b4b4]">
				<Eye />
			</button>
			<div className="flex w-[36px] shrink-0 items-center justify-center border-r border-[#262626] text-[#b4b4b4]">
				{editing ? (
					<Icon w={22} h={22} sw={1.5}>
						<path d="m2 19 2-6L16 1l4 3L8 17Z" {...fill} />
						<path d="m4 13 4 4" stroke="#404040" />
						<path d="M1 20.500h20" />
					</Icon>
				) : (
					<input type="checkbox" aria-label="参照" className="size-[15px] appearance-none rounded-[3px] border border-[#2b2b2b]" />
				)}
			</div>
		</>
	);
}

function LayerPanel() {
	const nameRef = useRef<HTMLInputElement>(null);

	useEffect(() => {
		nameRef.current?.focus();
		nameRef.current?.select();
	}, []);

	return (
		<section className="flex min-h-0 flex-1 flex-col overflow-hidden bg-[#404040]">
			<div className="-mb-[7px]">
				<PanelTab
					title="レイヤー"
					icon={
						<Icon w={22} h={24} sw={1.6} className="mt-1">
							<path d="m11 1 9 6-9 6-9-6ZM2 11l9 6 9-6M2 15l9 6 9-6" />
						</Icon>
					}
				/>
			</div>
			<div className="h-[127px] shrink-0 overflow-hidden bg-[#4d4d4d] pt-[7px] text-[#b4b4b4]">
				<div className="flex h-9 items-center">
					<button type="button" aria-label="パレットカラー" className="ml-[2px] flex h-9 w-[58px] shrink-0 items-center justify-between rounded-[3px] border border-[#757575] bg-[#5c5c5c] pr-[5px] pl-1">
						<span className="h-[22px] w-[25px] border-2 border-[#999999]" />
						<UpDown />
					</button>
					<label className="ml-1 flex h-9 w-[84px] shrink-0 items-center rounded-[3px] border border-[#757575] bg-[#5c5c5c] pr-[5px] pl-[14px]">
						<select aria-label="合成モード" className="min-w-0 flex-1 appearance-none bg-transparent text-[16px] text-[#cccccc]">
							<option>通常</option>
						</select>
						<UpDown />
					</label>
					<div className="ml-[9px] h-[14px] w-[76px] shrink-0 bg-[conic-gradient(#cfcfcf_25%,#f4f4f4_0_50%,#cfcfcf_0_75%,#f4f4f4_0)] bg-[length:16px_14px]">
						<div className="h-full bg-linear-to-r from-transparent to-[#a8a8a8]" />
					</div>
					<span className="h-8 w-[6px] shrink-0 border border-[#8a8a8a] bg-[#5c5c5c]" />
					<input aria-label="不透明度" defaultValue="100" className="mb-1 ml-[5px] w-[30px] shrink-0 bg-transparent text-right text-[16px] text-[#cccccc]" />
					<span className="ml-[3px]">
						<SmallUpDown />
					</span>
				</div>
				<div className="flex h-[38px] items-center pl-[37px]">
					<Icon w={24} h={24} className="mr-[18px]">
						<path d="M1 8h13v14H1Z" fill="#7a7a7a" stroke="none" />
						<rect x="6" y="6" width="12" height="12" {...fill} />
						<path d="M6 2h16v16h-3" strokeDasharray="3 2" />
					</Icon>
					<Icon w={24} h={24} className="mr-[20px]">
						<path d="M9 12h6l3 11H6ZM10 5h4v5h-4Z" {...fill} />
						<path d="m1 3 9 3-9 3M23 3l-9 3 9 3M10 5l2-3 2 3" strokeWidth={1.3} />
					</Icon>
					<Icon w={18} h={24} className="mr-[21px]">
						<rect x="1" y="10" width="16" height="12" rx="1.500" {...fill} />
						<path d="M4.500 10V6c0-5 9-5 9 0v4" strokeWidth={2} />
					</Icon>
					<Icon w={24} h={24} className="mr-[9px]">
						<path d="M5 2h6v6H5ZM17 2h6v6h-6ZM11 8h6v6h-6ZM17 14h6v6h-6Z" fill="#8a8a8a" stroke="none" />
						<rect x="1" y="12" width="12" height="11" fill="#4d4d4d" stroke="none" />
						<rect x="1" y="13" width="11" height="9" rx="1" {...fill} />
						<path d="M4 13v-2c0-3 5-3 5 0v2" />
					</Icon>
					<div className="mr-[2px] flex h-9 w-12 shrink-0 items-center bg-[#474747] pl-[7px] text-[#6c6c6c]">
						<Icon w={24} h={24}>
							<rect x="0" y="2" width="20" height="20" {...fill} />
							<circle cx="10" cy="12" r="6" fill="#474747" stroke="none" />
							<path d="m13 15 9 8M22 15l-9 8" strokeWidth={3} />
						</Icon>
						<UpDown className="-ml-[2px] text-[#858585]" />
					</div>
					<div className="flex h-9 w-12 shrink-0 items-center bg-[#474747] pl-[7px] text-[#6c6c6c]">
						<Icon w={24} h={24}>
							<path d="M0 1h24L0 23ZM5 6v6l7-6Z" fillRule="evenodd" {...fill} />
							<path d="m13 15 9 8M22 15l-9 8" strokeWidth={3} />
						</Icon>
						<UpDown className="-ml-[2px] text-[#858585]" />
					</div>
				</div>
				<div className="flex h-[46px] items-center gap-4 pl-[10px]">
					<Icon w={26} h={26}>
						<path d="M6 22H3l-2-2V3a1 1 0 0 1 1-1h18a1 1 0 0 1 1 1v9M1 15l6 6h6" />
						{Plus}
					</Icon>
					<Icon w={26} h={26}>
						<path d="M6 22H3l-2-2V3a1 1 0 0 1 1-1h18a1 1 0 0 1 1 1v9M1 15l6 6h6" />
						<path d="m11 5 5 2.500v6L11 16l-5-2.500v-6ZM6 7.500l5 2 5-2M11 10v6" strokeWidth={1.3} />
						{Plus}
					</Icon>
					<Icon w={26} h={26}>
						<path d="M1 21V2h8l2 3h10v16Z" {...fill} />
						<path d="M1 7h20" stroke="#4d4d4d" strokeWidth={1} />
						{Plus}
					</Icon>
					<Icon w={26} h={26}>
						<path d="M10 8V3a2 2 0 0 1 2-2h11a2 2 0 0 1 2 2v11a2 2 0 0 1-2 2h-5" />
						<rect x="15" y="5" width="6" height="6" {...fill} />
						<path d="M7 10H3a2 2 0 0 0-2 2v10a2 2 0 0 0 2 2h10a2 2 0 0 0 2-2v-1" />
						<path d="M18 13c0 4-2 5-10 5M11 15l-4 3 4 3" />
					</Icon>
					<Icon w={26} h={26}>
						<path d="M10 9V3a2 2 0 0 1 2-2h11a2 2 0 0 1 2 2v11a2 2 0 0 1-2 2h-6" />
						<path d="M10 9H3a2 2 0 0 0-2 2v11a2 2 0 0 0 2 2h11a2 2 0 0 0 2-2v-6M13 13l-7 7M6 14v6h6M10 9v3M13 16h4" />
					</Icon>
					<Icon w={26} h={26}>
						<rect x="2" y="2" width="22" height="22" rx="2" {...fill} />
						<circle cx="13" cy="13" r="6" fill="#404040" stroke="none" />
					</Icon>
					<Icon w={26} h={26}>
						<path d="M4 5h18M10 5V2h6v3M6 5l1 18h12l1-18M10.500 9v10M13 9v10M15.500 9v10" />
					</Icon>
				</div>
			</div>
			<ul className="text-[16px] leading-[21px] text-[#cccccc]">
				<li className="flex h-[50px] border-y border-[#262626]">
					<LayerCells editing />
					<div className="relative flex flex-1 items-center bg-[#626b84] pl-[7px]">
						<div className="border-2 border-white p-px">
							<Checker />
						</div>
						<span className="absolute top-[3px] left-[61px]">100 %&nbsp; 通常</span>
						<input
							ref={nameRef}
							aria-label="レイヤー名"
							defaultValue="レイヤー 1"
							className="absolute top-3 left-[60px] h-[37px] w-[117px] rounded-[3px] border border-[#7c7c7c] bg-[#626262] px-[7px] pb-[5px] text-[16px] outline-none selection:bg-[#5a6c9c] selection:text-[#dddddd]"
						/>
						<Burger className="absolute right-2 text-[#222222]" />
					</div>
				</li>
				<li className="flex h-[49px] border-b border-[#262626]">
					<LayerCells />
					<div className="relative flex flex-1 items-center pl-[10px]">
						<Checker />
						<p className="pl-3">
							100 %&nbsp; 通常
							<br />
							線画
						</p>
						<Burger className="absolute right-2 text-[#222222]" />
					</div>
				</li>
				<li className="flex h-[50px] border-b border-[#262626]">
					<LayerCells />
					<div className="relative flex flex-1 items-center pl-[10px]">
						<Checker paper />
						<span className="mb-3 ml-[19px] flex h-[26px] w-[26px] items-center justify-center border border-[#262626] bg-white text-[#333333]">
							<Icon w={18} h={22}>
								<path d="M6 21h9a2 2 0 0 0 2-2V3a2 2 0 0 0-2-2H3a2 2 0 0 0-2 2v13Z" />
								<path d="M1 16h5v5Z" {...fill} />
							</Icon>
						</span>
						<span className="mt-5 ml-[5px]">用紙</span>
						<Burger className="absolute right-2 text-[#222222]" />
					</div>
				</li>
			</ul>
		</section>
	);
}

/* on-screen keyboard */

interface KeyDef {
	top?: string;
	main?: string;
	grow?: string;
	size?: string;
	dark?: boolean;
	label?: string;
	end?: boolean;
	icon?: React.ReactNode;
}

const letters = (s: string): KeyDef[] => s.split('').map((c) => ({ main: c }));

const numberRow: KeyDef[] = [
	{ top: '!', main: '1', grow: 'grow-[166]' },
	{ top: '″', main: '2' },
	{ top: '#', main: '3' },
	{ top: '$', main: '4' },
	{ top: '%', main: '5' },
	{ top: '&', main: '6' },
	{ top: '′', main: '7' },
	{ top: '(', main: '8' },
	{ top: ')', main: '9' },
	{ top: ' ', main: '0' },
	{ top: '=', main: '−' },
	{ top: '~', main: '^' },
	{ top: '|', main: '¥' },
	{
		dark: true,
		end: true,
		label: '削除',
		grow: 'grow-[165]',
		icon: (
			<Icon w={43} h={32} sw={2.2}>
				<path d="M15 2h22a4 4 0 0 1 4 4v20a4 4 0 0 1-4 4H15c-1 0-2-.5-3-1.500L2 17.500c-1-1-1-2 0-3l10-11C13 2.500 14 2 15 2ZM20 10l12 12M32 10 20 22" />
			</Icon>
		),
	},
];

const topRow: KeyDef[] = [
	{
		dark: true,
		label: 'タブ',
		icon: (
			<Icon w={34} h={24} sw={2.2}>
				<path d="M1 12h27M19 4l9 8-9 8M33 1v22" />
			</Icon>
		),
	},
	...letters('qwertyuiop'),
	{ top: '`', main: '@' },
	{ top: '『', main: '｢' },
];

const homeRow: KeyDef[] = [
	{ dark: true, main: 'abc', label: 'abc', grow: 'grow-[166]' },
	...letters('asdfghjkl'),
	{ top: '+', main: ';' },
	{ top: '*', main: ':' },
	{ top: '』', main: '｣' },
];

const Shift = (
	<Icon w={35} h={34} sw={2.2}>
		<path d="m17.500 2 16 17.500c.5.700.2 1.500-.6 1.500h-6.400v9.500c0 1-.5 1.500-1.500 1.500H10c-1 0-1.500-.5-1.500-1.500V21H2.100c-.8 0-1.100-.8-.6-1.500Z" />
	</Icon>
);

const bottomRow: KeyDef[] = [
	{ dark: true, label: 'シフト', grow: 'grow-[237]', icon: Shift },
	...letters('zxcvbnm'),
	{ top: '<', main: '､' },
	{ top: '>', main: '｡' },
	{ top: '?', main: '･' },
	{ main: '＿', size: 'text-[38px]' },
	{ dark: true, end: true, label: '右シフト', grow: 'grow-[237]', icon: Shift },
];

const spaceRow: KeyDef[] = [
	{
		dark: true,
		label: '次のキーボード',
		grow: 'grow-[190]',
		icon: (
			<Icon w={35} h={39} sw={2}>
				<circle cx="17.500" cy="18" r="16.500" />
				<ellipse cx="17.500" cy="18" rx="8" ry="16.500" />
				<path d="M1.500 18h32M17.500 2v32M5 8c7 5 18 5 25 0M5 28c7-5 18-5 25 0" />
			</Icon>
		),
	},
	{ dark: true, main: '.?123', label: '記号', grow: 'grow-[187]' },
	{
		dark: true,
		label: '音声入力',
		grow: 'grow-[187]',
		icon: (
			<Icon w={22} h={39} sw={2}>
				<rect x="6" y="1.500" width="10" height="22" rx="5" />
				<path d="M1.500 16v3c0 12 19 12 19 0v-3M11 28v6M5 34h12" />
			</Icon>
		),
	},
	{ main: '空白', size: 'text-[26px]', grow: 'grow-[838]' },
	{ dark: true, end: true, main: '.?123', label: '記号(右)', grow: 'grow-[288]' },
	{
		dark: true,
		end: true,
		label: 'キーボードを閉じる',
		grow: 'grow-[290]',
		icon: (
			<Icon w={46} h={36} sw={2.2}>
				<rect x="1.500" y="1.500" width="43" height="23" rx="1.500" />
				<path d="M6 7h34M6 13h34" strokeWidth={3.4} strokeDasharray="3.500 1.600" strokeLinecap="butt" />
				<path d="M6 19h3.500M12 19h22M36.500 19H40" strokeWidth={3.4} strokeLinecap="butt" />
				<path d="m16.500 29.500 6.500 5.500 6.500-5.500" />
			</Icon>
		),
	},
];

function Key({ top, main, grow = 'grow-[128]', size = 'pb-2 text-[42px]', dark, label, end, icon }: KeyDef) {
	const base = `flex min-w-0 basis-0 overflow-hidden rounded-[11px] text-white shadow-[0_2px_0_rgba(0,0,0,0.35)] ${grow}`;

	if (dark) {
		return (
			<button type="button" aria-label={label} className={`${base} items-end bg-white/12 pb-4 ${end ? 'justify-end' : ''}`}>
				{icon ? <span className="mx-[25px]">{icon}</span> : <span className="mx-[25px] pb-[2px] text-[28px] leading-8">{main}</span>}
			</button>
		);
	}
	if (top) {
		return (
			<button
				type="button"
				className={`${base} flex-col items-center justify-around bg-white/30 py-[7px] text-[28px] leading-9 [font-feature-settings:'halt']`}
			>
				<span className="h-9">{top}</span>
				<span className="h-9">{main}</span>
			</button>
		);
	}
	return (
		<button type="button" className={`${base} items-center justify-center bg-white/30 ${size}`}>
			{main}
		</button>
	);
}

function KeyRow({ keys, tall = true, children }: { keys: KeyDef[]; tall?: boolean; children?: React.ReactNode }) {
	return (
		<div className={`-mr-[6px] flex gap-[14px] ${tall ? 'h-[119px]' : 'h-[89px]'}`}>
			{keys.map((k, i) => (
				<Key key={i} {...k} />
			))}
			{children}
		</div>
	);
}

const arrows = [
	{ name: '左', d: 'M1 13 27 2v22Z' },
	{ name: '上', d: 'M14 0l10 26H4Z' },
	{ name: '下', d: 'M14 26 4 0h20Z' },
	{ name: '右', d: 'M27 13 1 2v22Z' },
];

function Keyboard() {
	return (
		<div className="shrink-0 overflow-hidden bg-[linear-gradient(to_bottom,transparent_80%,#3c3c3ce0_100%),radial-gradient(ellipse_260px_110px_at_150px_80px,#464a5499,transparent),radial-gradient(ellipse_420px_190px_at_120px_660px,#50505499,transparent),linear-gradient(to_right,#3d3d3d_0%,#3f3f3f_12%,#383838_21.5%,#656565_26.5%,#696969_50%,#656565_68.5%,#373737_74.5%,#3b3b3b_100%)] pl-[6px]">
			<div className="flex h-[100px] items-start">
				<div className="flex h-[84px] w-[525px] items-center pl-3 text-white">
					<button type="button" aria-label="カット" className="flex w-[68px] justify-center">
						<Icon w={40} h={30} sw={2.6}>
							<circle cx="7" cy="7" r="5" />
							<circle cx="7" cy="23" r="5" />
							<path d="m12 9 5 3 15-7c3-1 5-1 6 1L19 16l19 8c-1 2-4 3-7 1l-14-7-5 3-1-2 5-4-5-4Z" {...fill} />
						</Icon>
					</button>
					<button type="button" aria-label="コピー" className="flex w-[68px] justify-center">
						<Icon w={32} h={38} sw={2.4}>
							<path d="M9 8V5a3 3 0 0 1 3-3h8l10 10v15a3 3 0 0 1-3 3h-3M20 2v8a2 2 0 0 0 2 2h8" />
							<path d="M2 11a3 3 0 0 1 3-3h7l11 11v14a3 3 0 0 1-3 3H5a3 3 0 0 1-3-3ZM12 8v9a2 2 0 0 0 2 2h9" />
						</Icon>
					</button>
					<button type="button" aria-label="ペースト" className="flex w-[68px] justify-center text-[#94959a]">
						<Icon w={32} h={38} sw={2.4}>
							<path d="M9 4a3 3 0 0 1 3-3h16a3 3 0 0 1 3 3v23a3 3 0 0 1-3 3h-4V18L13 7H9Z" {...fill} />
							<path d="M16 5h8" stroke="#45474d" />
							<path d="M2 11a3 3 0 0 1 3-3h7l11 11v14a3 3 0 0 1-3 3H5a3 3 0 0 1-3-3ZM12 8v9a2 2 0 0 0 2 2h9" />
						</Icon>
					</button>
				</div>
				<div className="mt-[15px] h-[54px] flex-1 border-x border-white/15" />
				<div className="flex h-[84px] w-[519px] items-center justify-end pr-1 text-white">
					{arrows.map((a) => (
						<button key={a.name} type="button" aria-label={a.name} className="flex w-[68px] justify-center">
							<Icon w={28} h={26}>
								<path d={a.d} {...fill} />
							</Icon>
						</button>
					))}
				</div>
			</div>
			<div className="flex flex-col gap-[14px] pb-4">
				<KeyRow keys={numberRow} tall={false} />
				<KeyRow keys={topRow}>
					<div className="grow-[204] basis-0 rounded-l-[11px] rounded-tr-[11px] bg-[#357af6] shadow-[0_2px_0_rgba(0,0,0,0.35)]" />
				</KeyRow>
				<KeyRow keys={homeRow}>
					<button
						type="button"
						aria-label="改行"
						className="relative -mt-[15px] flex grow-[165] basis-0 items-end justify-end rounded-b-[11px] bg-[#357af6] pb-4 text-white shadow-[0_2px_0_rgba(0,0,0,0.35)]"
					>
						<span className="absolute top-px -left-[11px] size-[11px] bg-[radial-gradient(circle_at_0_100%,transparent_10px,#357af6_11px)]" />
						<Icon w={35} h={26} sw={2.2} className="mx-[25px]">
							<path d="M24 2h5a5 5 0 0 1 5 5v5a5 5 0 0 1-5 5H2M13 9 2 17l11 8" />
						</Icon>
					</button>
				</KeyRow>
				<KeyRow keys={bottomRow} />
				<KeyRow keys={spaceRow} />
			</div>
			<div className="flex h-[18px] justify-center pl-[6px]">
				<div className="h-2 w-[520px] rounded-full bg-white" />
			</div>
		</div>
	);
}

export default function App() {
	return (
		<div className="flex h-screen flex-col overflow-hidden bg-[#383838] font-['Inter','Noto_Sans_CJK_JP',sans-serif]">
			<header className="shrink-0 bg-[#4e4e4e]">
				<StatusBar />
				<MenuBar />
			</header>
			<main className="flex min-h-0 flex-1 overflow-hidden">
				<ToolColumn />
				<div className="mr-[2px] ml-[3px] flex w-[311px] shrink-0 flex-col">
					<div className="flex h-[31px] shrink-0 items-center bg-[#383838] pr-[3px] pl-[2px]">
						<DoubleLeft />
						<span className="ml-8 flex-1">
							<Left />
						</span>
						<Grip />
					</div>
					<QuickAccess />
					<ToolProperty />
				</div>
				<PaletteDock />
				<div className="flex min-w-0 flex-1 flex-col">
					<CommandBar />
					<div className="mt-px flex min-h-0 flex-1 flex-col">
						<DocumentTabs />
						<Canvas />
					</div>
				</div>
				<aside className="ml-1 flex w-[284px] shrink-0 flex-col overflow-hidden">
					<div className="flex h-[31px] shrink-0 items-center bg-[#383838] pl-1">
						<Grip />
						<span className="flex-1" />
						<span className="mr-[33px]">
							<Right />
						</span>
						<span className="-mr-1">
							<Right />
						</span>
					</div>
					<LayerProperty />
					<LayerPanel />
				</aside>
			</main>
			<Keyboard />
		</div>
	);
}
